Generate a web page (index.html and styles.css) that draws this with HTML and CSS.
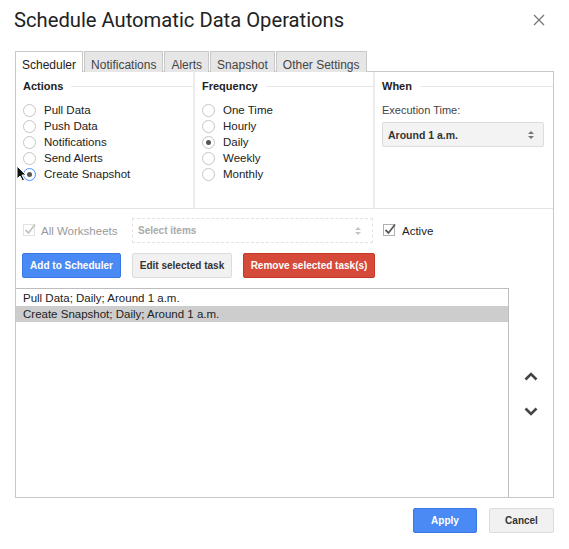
FILE: index.html
```html
<!DOCTYPE html>
<html>
<head>
<meta charset="utf-8">
<title>Schedule Automatic Data Operations</title>
<link rel="stylesheet" href="styles.css">
</head>
<body>
<div class="dialog">
  <header class="title-bar">
    <h1 class="title">Schedule Automatic Data Operations</h1>
    <button class="close" aria-label="Close">
      <svg width="12" height="12" viewBox="0 0 12 12"><path d="M1 1L11 11M11 1L1 11" stroke="#777" stroke-width="1.3" fill="none"/></svg>
    </button>
  </header>

  <nav class="tabs">
    <div class="tab active">Scheduler</div>
    <div class="tab">Notifications</div>
    <div class="tab">Alerts</div>
    <div class="tab">Snapshot</div>
    <div class="tab">Other Settings</div>
  </nav>

  <section class="panel">
    <div class="groups">
      <div class="group">
        <div class="legend">Actions</div>
        <div class="radio"><span class="circle"></span>Pull Data</div>
        <div class="radio"><span class="circle"></span>Push Data</div>
        <div class="radio"><span class="circle"></span>Notifications</div>
        <div class="radio"><span class="circle"></span>Send Alerts</div>
        <div class="radio"><span class="circle checked focus"></span>Create Snapshot</div>
      </div>
      <div class="group">
        <div class="legend">Frequency</div>
        <div class="radio"><span class="circle"></span>One Time</div>
        <div class="radio"><span class="circle"></span>Hourly</div>
        <div class="radio"><span class="circle checked"></span>Daily</div>
        <div class="radio"><span class="circle"></span>Weekly</div>
        <div class="radio"><span class="circle"></span>Monthly</div>
      </div>
      <div class="group last">
        <div class="legend">When</div>
        <div class="field-label">Execution Time:</div>
        <div class="select time-select">
          <span>Around 1 a.m.</span>
          <span class="spinner"><i class="up"></i><i class="down"></i></span>
        </div>
      </div>
    </div>

    <div class="options-row">
      <label class="check disabled ws-check">
        <svg class="box" width="14" height="14" viewBox="0 0 14 14"><rect x="0.5" y="1.5" width="11" height="11" fill="#fff" stroke="#e2e2e2"/><path d="M2.5 7L5.5 10L12 1.5" stroke="#c4c4c4" stroke-width="1.8" fill="none"/></svg>
        All Worksheets
      </label>
      <div class="select items-select">
        <span>Select items</span>
        <span class="spinner light"><i class="up"></i><i class="down"></i></span>
      </div>
      <label class="check active-check">
        <svg class="box" width="14" height="14" viewBox="0 0 14 14"><rect x="0.5" y="1.5" width="11" height="11" fill="#fff" stroke="#b0b0b0"/><path d="M2.5 7L5.5 10L12 1.5" stroke="#5a5a5a" stroke-width="1.8" fill="none"/></svg>
        Active
      </label>
    </div>

    <div class="button-row">
      <button class="btn blue add">Add to Scheduler</button>
      <button class="btn grey edit">Edit selected task</button>
      <button class="btn red remove">Remove selected task(s)</button>
    </div>

    <div class="list-area">
      <div class="listbox">
        <div class="row">Pull Data; Daily; Around 1 a.m.</div>
        <div class="row selected">Create Snapshot; Daily; Around 1 a.m.</div>
      </div>
      <div class="movers">
        <button class="mover" aria-label="Move up">
          <svg width="14" height="9" viewBox="0 0 14 9"><path d="M1.5 7.5L7 2L12.5 7.5" stroke="#444" stroke-width="2.6" fill="none"/></svg>
        </button>
        <button class="mover" aria-label="Move down">
          <svg width="14" height="9" viewBox="0 0 14 9"><path d="M1.5 1.5L7 7L12.5 1.5" stroke="#444" stroke-width="2.6" fill="none"/></svg>
        </button>
      </div>
    </div>
  </section>

  <footer class="footer">
    <button class="btn blue apply">Apply</button>
    <button class="btn grey cancel">Cancel</button>
  </footer>

  <svg class="cursor" width="11" height="17" viewBox="0 0 11 17"><path d="M1 1L1 14L4 11L6.5 16L8.5 15L6 10L10 10Z" fill="#111" stroke="#fff" stroke-width="1"/></svg>
</div>
</body>
</html>
```
FILE: styles.css
```css
* { box-sizing: border-box; }

body {
  margin: 0;
  background: #fff;
  font-family: "Liberation Sans", Arial, sans-serif;
  color: #222;
}

.dialog {
  position: relative;
  width: 569px;
  height: 549px;
  padding: 0 15px 0 15px;
}

.title-bar {
  display: flex;
  align-items: center;
  justify-content: space-between;
  height: 51px;
  padding-bottom: 11px;
}

.title {
  margin: 0 0 0 -1px;
  font-family: Roboto, "Open Sans", sans-serif;
  font-weight: 400;
  font-size: 20.2px;
  line-height: 24px;
  color: #222;
}

.close {
  border: 0;
  background: none;
  padding: 0;
  margin-right: 9px;
  width: 12px;
  height: 12px;
  display: flex;
}

.tabs {
  display: flex;
  height: 20px;
  margin-left: 0;
  position: relative;
  z-index: 1;
}

.tab {
  height: 21px;
  padding: 6px 6px 0 6px;
  font-size: 12px;
  line-height: 14px;
  color: #444;
  background: #e6e6e6;
  border: 1px solid #c8c8c8;
  border-bottom: none;
  margin-right: 1px;
}

.tab.active {
  background: #fff;
  color: #222;
  height: 21px;
}

.panel {
  width: 539px;
  height: 427px;
  border: 1px solid #c8c8c8;
  display: flex;
  flex-direction: column;
}

.groups {
  display: grid;
  grid-template-columns: 179px 180px 1fr;
  height: 137px;
}

.group {
  border-right: 2px solid #ececec;
  border-bottom: 1px solid #e4e4e4;
  padding: 8px 0 0 7px;
}

.group.last { border-right: none; }

.legend {
  display: flex;
  align-items: center;
  font-size: 11px;
  font-weight: bold;
  line-height: 13px;
  color: #222;
  margin-bottom: 9px;
}

.legend::after {
  content: "";
  flex: 1;
  border-top: 1px solid #e8e8e8;
  margin-left: 8px;
}

.radio {
  display: flex;
  align-items: center;
  height: 16px;
  font-size: 11.5px;
  color: #222;
}

.circle {
  width: 13px;
  height: 13px;
  border: 1px solid #c6c6c6;
  border-radius: 50%;
  margin-right: 8px;
  background: #fff;
  position: relative;
}

.circle.checked::after {
  content: "";
  position: absolute;
  left: 3px;
  top: 3px;
  width: 5px;
  height: 5px;
  border-radius: 50%;
  background: #555;
}

.circle.focus { border-color: #4d90fe; }

.field-label {
  font-size: 11px;
  line-height: 16px;
  height: 16px;
  color: #444;
}

.select {
  display: flex;
  align-items: center;
  justify-content: space-between;
  height: 25px;
  padding: 0 9px 0 5px;
}

.time-select {
  margin-top: 4px;
  width: 162px;
  background: #f3f3f3;
  border: 1px solid #dcdcdc;
  border-radius: 2px;
  font-size: 10.5px;
  font-weight: bold;
  color: #333;
}

.spinner {
  display: flex;
  flex-direction: column;
  gap: 2px;
}

.spinner i {
  display: block;
  width: 0;
  height: 0;
  border-left: 3px solid transparent;
  border-right: 3px solid transparent;
}

.spinner .up { border-bottom: 3px solid #777; }
.spinner .down { border-top: 3px solid #777; }
.spinner.light .up { border-bottom-color: #c4c4c4; }
.spinner.light .down { border-top-color: #c4c4c4; }

.options-row {
  display: flex;
  align-items: center;
  padding: 9px 0 0 7px;
  height: 34px;
}

.check {
  display: flex;
  align-items: center;
  font-size: 11.5px;
}

.check .box { margin-right: 4px; margin-top: -2px; }

.ws-check {
  width: 109px;
  color: #9a9a9a;
}

.items-select {
  width: 241px;
  border: 1px dashed #e2e2e2;
  font-size: 10px;
  font-weight: bold;
  color: #aaa;
  padding: 0 11px 0 5px;
}

.active-check {
  margin-left: 10px;
  color: #222;
}

.active-check .box { margin-right: 5px; }

.button-row {
  display: flex;
  gap: 11px;
  padding: 10px 0 0 6px;
}

.btn {
  height: 25px;
  border-radius: 2px;
  font-family: "Liberation Sans", Arial, sans-serif;
  font-size: 10px;
  font-weight: bold;
  padding: 0;
  cursor: default;
}

.btn.blue {
  background: #4a8af4;
  border: 1px solid #3b78e7;
  color: #fff;
}

.btn.grey {
  background: #f1f1f1;
  border: 1px solid #dcdcdc;
  color: #333;
}

.btn.red {
  background: #d54a38;
  border: 1px solid #c53727;
  color: #fff;
}

.add { width: 99px; }
.edit { width: 100px; }
.remove { width: 132px; }

.list-area {
  flex: 1;
  display: flex;
  margin-top: 10px;
}

.listbox {
  width: 493px;
  border-top: 1px solid #bdbdbd;
  border-right: 1px solid #bdbdbd;
  padding-top: 1px;
}

.row {
  height: 16px;
  line-height: 16px;
  font-size: 11.5px;
  padding-left: 7px;
  color: #222;
}

.row.selected { background: #cdcdcd; }

.movers {
  flex: 1;
  display: flex;
  flex-direction: column;
  align-items: center;
  justify-content: center;
  gap: 26px;
  padding-top: 2px;
}

.mover {
  border: 0;
  background: none;
  padding: 0;
  width: 14px;
  height: 9px;
  display: flex;
}

.footer {
  display: flex;
  justify-content: flex-end;
  gap: 12px;
  margin-top: 10px;
}

.apply { width: 64px; }
.cancel { width: 65px; }

.cursor {
  position: absolute;
  left: 16px;
  top: 165px;
}
```
